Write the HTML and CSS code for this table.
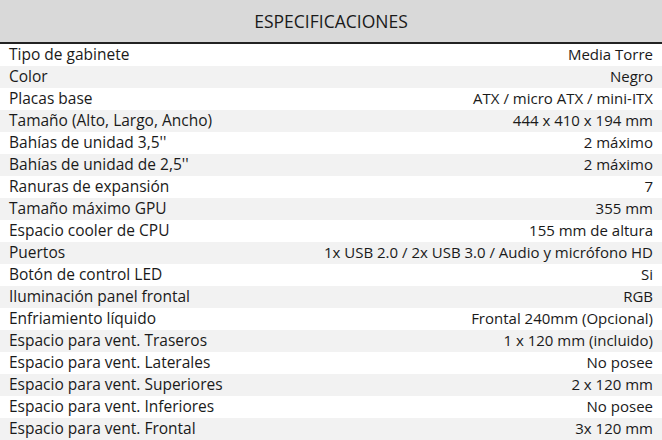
FILE: index.html
```html
<!DOCTYPE html>
<html lang="es">
<head>
<meta charset="utf-8">
<link rel="stylesheet" href="styles.css">
</head>
<body>
<div class="specs">
  <div class="specs-header">ESPECIFICACIONES</div>
  <div class="row"><span class="label">Tipo de gabinete</span><span class="value">Media Torre</span></div>
  <div class="row"><span class="label">Color</span><span class="value">Negro</span></div>
  <div class="row"><span class="label">Placas base</span><span class="value">ATX / micro ATX / mini-ITX</span></div>
  <div class="row"><span class="label">Tamaño (Alto, Largo, Ancho)</span><span class="value">444 x 410 x 194 mm</span></div>
  <div class="row"><span class="label">Bahías de unidad 3,5''</span><span class="value">2 máximo</span></div>
  <div class="row"><span class="label">Bahías de unidad de 2,5''</span><span class="value">2 máximo</span></div>
  <div class="row"><span class="label">Ranuras de expansión</span><span class="value">7</span></div>
  <div class="row"><span class="label">Tamaño máximo GPU</span><span class="value">355 mm</span></div>
  <div class="row"><span class="label">Espacio cooler de CPU</span><span class="value">155 mm de altura</span></div>
  <div class="row"><span class="label">Puertos</span><span class="value">1x USB 2.0 / 2x USB 3.0 / Audio y micrófono HD</span></div>
  <div class="row"><span class="label">Botón de control LED</span><span class="value">Si</span></div>
  <div class="row"><span class="label">Iluminación panel frontal</span><span class="value">RGB</span></div>
  <div class="row"><span class="label">Enfriamiento líquido</span><span class="value">Frontal 240mm (Opcional)</span></div>
  <div class="row"><span class="label">Espacio para vent. Traseros</span><span class="value">1 x 120 mm (incluido)</span></div>
  <div class="row"><span class="label">Espacio para vent. Laterales</span><span class="value">No posee</span></div>
  <div class="row"><span class="label">Espacio para vent. Superiores</span><span class="value">2 x 120 mm</span></div>
  <div class="row"><span class="label">Espacio para vent. Inferiores</span><span class="value">No posee</span></div>
  <div class="row"><span class="label">Espacio para vent. Frontal</span><span class="value">3x 120 mm</span></div>
</div>
</body>
</html>
```

FILE: styles.css
```css
html, body {
  margin: 0;
  padding: 0;
  background: #ffffff;
}
body {
  font-family: "Open Sans", "DejaVu Sans", sans-serif;
  color: #1a1a1a;
}
.specs {
  width: 662px;
  display: flex;
  flex-direction: column;
}
.specs-header {
  height: 42px;
  background: #d9d9d9;
  border-bottom: 2px solid #222222;
  display: flex;
  align-items: center;
  justify-content: center;
  font-size: 17.5px;
  color: #1a1a1a;
}
.row {
  height: 22px;
  line-height: 20px;
  display: flex;
  align-items: flex-start;
  justify-content: space-between;
  padding: 0 9px;
  font-size: 15.5px;
}
.value {
  font-size: 15px;
}
.row:nth-child(odd) {
  background: #f2f2f2;
}
.row:nth-child(even) {
  background: #ffffff;
}
```
